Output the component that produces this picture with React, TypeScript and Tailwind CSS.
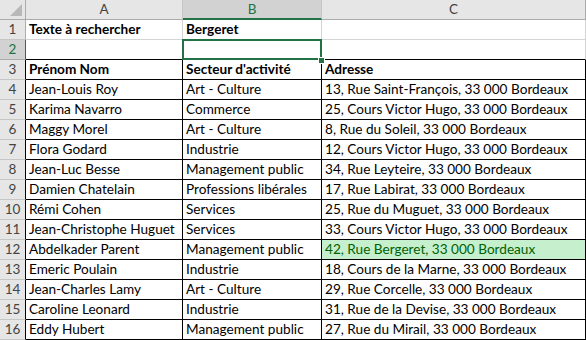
import React from "react";

const rows: [string, string, string][] = [
  ["Jean-Louis Roy", "Art - Culture", "13, Rue Saint-François, 33 000 Bordeaux"],
  ["Karima Navarro", "Commerce", "25, Cours Victor Hugo, 33 000 Bordeaux"],
  ["Maggy Morel", "Art - Culture", "8, Rue du Soleil, 33 000 Bordeaux"],
  ["Flora Godard", "Industrie", "12, Cours Victor Hugo, 33 000 Bordeaux"],
  ["Jean-Luc Besse", "Management public", "34, Rue Leyteire, 33 000 Bordeaux"],
  ["Damien Chatelain", "Professions libérales", "17, Rue Labirat, 33 000 Bordeaux"],
  ["Rémi Cohen", "Services", "25, Rue du Muguet, 33 000 Bordeaux"],
  ["Jean-Christophe Huguet", "Services", "33, Cours Victor Hugo, 33 000 Bordeaux"],
  ["Abdelkader Parent", "Management public", "42, Rue Bergeret, 33 000 Bordeaux"],
  ["Emeric Poulain", "Industrie", "18, Cours de la Marne, 33 000 Bordeaux"],
  ["Jean-Charles Lamy", "Art - Culture", "29, Rue Corcelle, 33 000 Bordeaux"],
  ["Caroline Leonard", "Industrie", "31, Rue de la Devise, 33 000 Bordeaux"],
  ["Eddy Hubert", "Management public", "27, Rue du Mirail, 33 000 Bordeaux"],
];

const font = { fontFamily: "Lato, 'Liberation Sans', sans-serif" };

function RowHead({ n, selected, dark }: { n: number; selected?: boolean; dark?: boolean }) {
  return (
    <div
      className={
        "w-[26px] h-[20px] flex items-end justify-center pb-[1px] text-[13.5px] leading-[18px] border-b border-r " +
        (selected
          ? "bg-[#d2d2d2] text-[#217346] border-b-[#ababab] border-r-[#217346]"
          : "bg-[#e6e6e6] text-[#444444] border-b-[#c6c6c6] " + (dark ? "border-r-black" : "border-r-[#ababab]"))
      }
    >
      {n}
    </div>
  );
}

function Cell({
  w,
  children,
  bold,
  table,
  green,
  bottomBlack,
}: {
  w: string;
  children?: React.ReactNode;
  bold?: boolean;
  table?: boolean;
  green?: boolean;
  bottomBlack?: boolean;
}) {
  return (
    <div
      className={
        w +
        " h-[20px] flex items-end pl-[3px] pb-[1px] text-[13.6px] leading-[18px] whitespace-nowrap overflow-hidden border-r border-b " +
        (table ? "border-r-black border-b-black " : "border-r-[#d4d4d4] " + (bottomBlack ? "border-b-black " : "border-b-[#d4d4d4] ")) +
        (bold ? "font-bold " : "") +
        (green ? "bg-[#c6efce] text-[#006100]" : "bg-white text-black")
      }
    >
      {children}
    </div>
  );
}

export default function App() {
  return (
    <div className="relative w-[586px] h-[340px] bg-white overflow-hidden" style={font}>
      {/* header row */}
      <div className="flex">
        <div className="relative w-[26px] h-[20px] bg-[#e6e6e6] border-r border-b border-r-[#ababab] border-b-[#ababab]">
          <svg className="absolute right-[3px] bottom-[3px]" width="12" height="12" viewBox="0 0 12 12">
            <polygon points="12,0 12,12 0,12" fill="#b8b8b8" />
          </svg>
        </div>
        <div className="w-[157px] h-[20px] bg-[#e6e6e6] border-r border-b border-r-[#c6c6c6] border-b-[#ababab] flex items-center justify-center text-[13.5px] text-[#444444]">
          A
        </div>
        <div className="w-[139px] h-[20px] bg-[#d2d2d2] border-r border-r-[#c6c6c6] border-b-2 border-b-[#217346] flex items-center justify-center text-[13.5px] text-[#217346]">
          B
        </div>
        <div className="w-[264px] h-[20px] bg-[#e6e6e6] border-r border-b border-r-[#ababab] border-b-[#ababab] flex items-center justify-center text-[13.5px] text-[#444444]">
          C
        </div>
      </div>
      {/* row 1 */}
      <div className="flex">
        <RowHead n={1} />
        <Cell w="w-[157px]" bold>Texte à rechercher</Cell>
        <Cell w="w-[139px]" bold>Bergeret</Cell>
        <Cell w="w-[264px]" />
      </div>
      {/* row 2 */}
      <div className="flex">
        <RowHead n={2} selected />
        <Cell w="w-[157px]" bottomBlack />
        <Cell w="w-[139px]" bottomBlack />
        <Cell w="w-[264px]" bottomBlack />
      </div>
      {/* row 3 */}
      <div className="flex">
        <RowHead n={3} dark />
        <Cell w="w-[157px]" bold table>Prénom Nom</Cell>
        <Cell w="w-[139px]" bold table>Secteur d'activité</Cell>
        <Cell w="w-[264px]" bold table>Adresse</Cell>
      </div>
      {rows.map((r, i) => (
        <div className="flex" key={i}>
          <RowHead n={i + 4} dark />
          <Cell w="w-[157px]" table>{r[0]}</Cell>
          <Cell w="w-[139px]" table>{r[1]}</Cell>
          <Cell w="w-[264px]" table green={i + 4 === 12}>{r[2]}</Cell>
        </div>
      ))}
      {/* selection */}
      <div className="absolute left-[182px] top-[39px] w-[140px] h-[21px] border-2 border-[#217346] pointer-events-none" />
      <div className="absolute left-[318px] top-[57px] w-[5px] h-[5px] bg-[#217346] border border-white box-content" />
    </div>
  );
}
